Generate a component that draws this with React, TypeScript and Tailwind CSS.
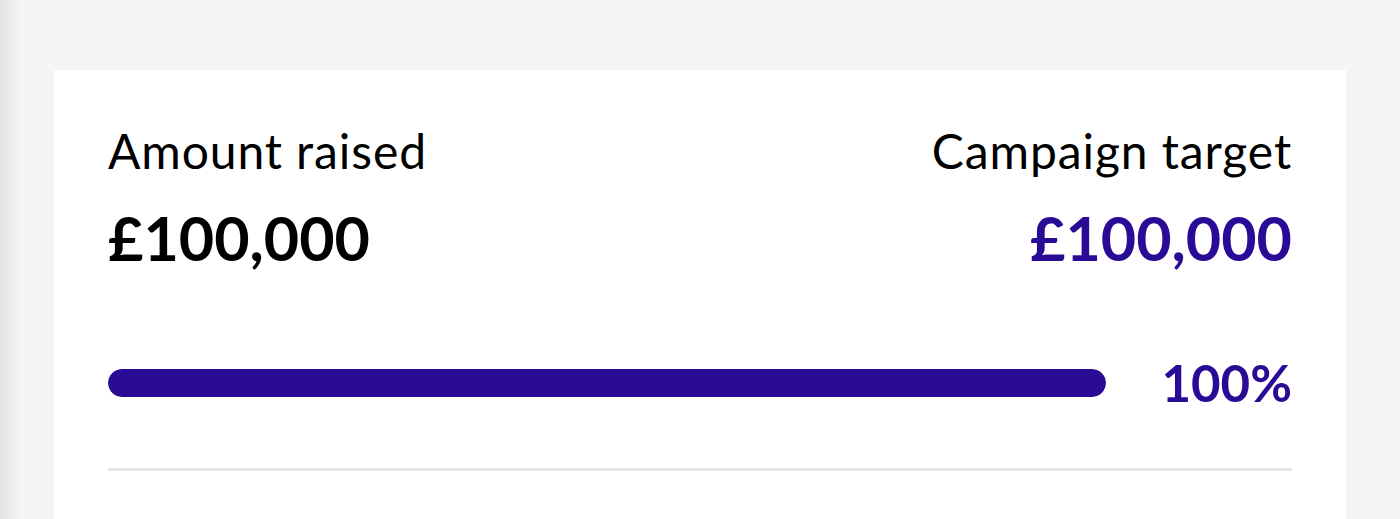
import React from 'react';

const raised = 100000;
const target = 100000;

function formatGBP(value: number) {
    return '£' + value.toLocaleString('en-GB');
}

export default function App() {
    const percent = Math.round((raised / target) * 100);

    return (
        <div className="h-[519px] overflow-hidden bg-[#f5f5f5] bg-[linear-gradient(to_right,#e3e3e3,#f5f5f5_22px)] pt-[70px] px-[54px] font-['Lato',sans-serif]">
            <div className="bg-white h-[449px] px-[54px] pt-[57px]">
                <div className="flex justify-between">
                    <div>
                        <div className="text-[48px] leading-none tracking-[0.9px] text-black">Amount raised</div>
                        <div className="mt-[32px] text-[61px] leading-none font-bold text-black">{formatGBP(raised)}</div>
                    </div>
                    <div className="text-right">
                        <div className="text-[48px] leading-none tracking-[0.9px] text-black">Campaign target</div>
                        <div className="mt-[32px] text-[61px] leading-none font-bold text-[#2a0b95]">{formatGBP(target)}</div>
                    </div>
                </div>

                <div className="mt-[89px] flex items-center gap-[55px]">
                    <div className="flex-1 h-[28px] rounded-full bg-[#ededed] overflow-hidden">
                        <div className="h-full rounded-full bg-[#2a0b95]" style={{ width: `${percent}%` }} />
                    </div>
                    <div className="text-[51px] leading-none font-bold text-[#2a0b95]">{percent}%</div>
                </div>

                <div className="mt-[60px] h-[3px] bg-[#e6e6e6]" />
            </div>
        </div>
    );
}
